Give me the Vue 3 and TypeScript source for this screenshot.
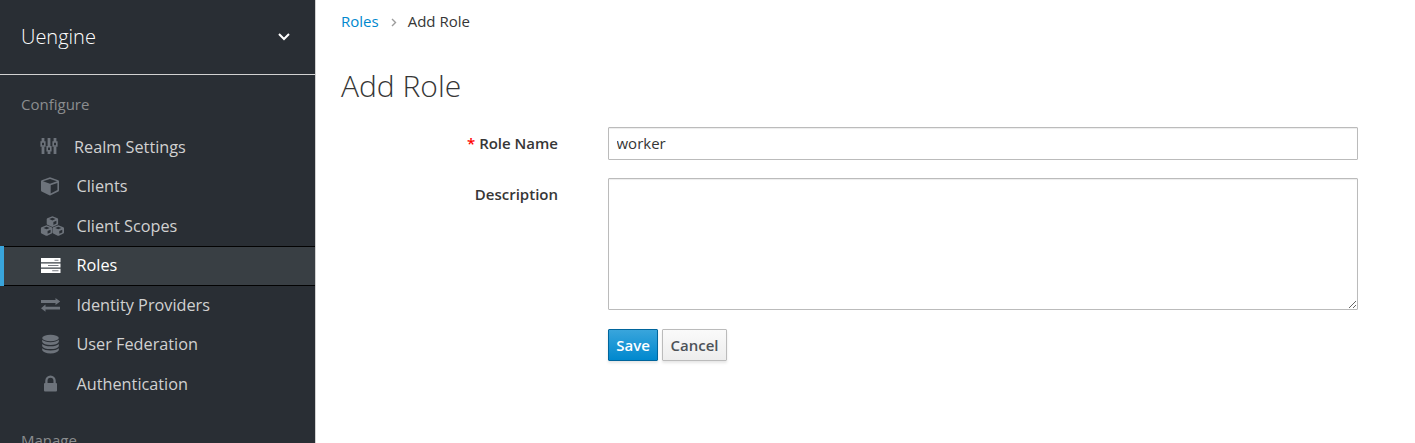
<script setup lang="ts">
import { ref } from 'vue'

interface NavItem {
  id: string
  label: string
}

const items: NavItem[] = [
  { id: 'settings', label: 'Realm Settings' },
  { id: 'clients', label: 'Clients' },
  { id: 'scopes', label: 'Client Scopes' },
  { id: 'roles', label: 'Roles' },
  { id: 'identity', label: 'Identity Providers' },
  { id: 'federation', label: 'User Federation' },
  { id: 'auth', label: 'Authentication' },
]

const cubePlaces = ['translate(6.8 .3)', 'translate(1 9.2)', 'translate(12.7 9.2)']

const active = ref('roles')
const roleName = ref('worker')
const description = ref('')
</script>

<template>
  <div class="page">
    <aside class="sidebar">
      <div class="realm">
        <span>Uengine</span>
        <svg width="14" height="10" viewBox="0 0 14 10"><path d="M2 2l5 5 5-5" fill="none" stroke="#fff" stroke-width="2" /></svg>
      </div>
      <h2 class="group">Configure</h2>
      <nav>
        <a v-for="item in items" :key="item.id" class="item" :class="[item.id, { active: active === item.id }]" @click="active = item.id">
          <svg class="icon" width="24" height="20" viewBox="0 0 24 20">
            <g v-if="item.id === 'settings'" fill="none" stroke="currentColor">
              <path d="M3 1v4M3 9.5V17M9 1v8M9 14v3M15 1v4M15 9.5V17" stroke-width="2.8" />
              <path d="M1.2 5h3.6v4H1.2zM7.2 9.7h3.6v4H7.2zM13.2 5h3.6v4h-3.6z" stroke-width="1.6" />
            </g>
            <g v-else-if="item.id === 'clients'">
              <path d="M10 1.3L18.3 4.2Q19 4.5 19 5.3V14.3Q19 15 18.4 15.4L10.7 19.3Q10 19.6 9.3 19.3L1.6 15.4Q1 15 1 14.3V5.3Q1 4.5 1.7 4.2ZM10 2.9L3 5.3 10 7.8 17 5.3ZM10.7 17.4L17.4 13.9V6.9L10.7 9.3Z" fill="currentColor" fill-rule="evenodd" />
            </g>
            <g v-else-if="item.id === 'scopes'" fill="currentColor" fill-rule="evenodd">
              <path v-for="place in cubePlaces" :key="place" :transform="place" d="M5.6 0L10.7 2Q11.3 2.3 11.3 3V7.4Q11.3 8.1 10.7 8.4L6.2 10.5Q5.6 10.8 5 10.5L.5 8.4Q-.1 8.1-.1 7.4V3Q-.1 2.3.5 2ZM5.6 1.5L2.5 2.8 5.6 4.1 8.7 2.8ZM6.6 8.6L9.6 7.2V4.5L6.6 5.8Z" />
            </g>
            <g v-else-if="item.id === 'roles'">
              <path d="M1 2h19.5v4.3H1zM1 7.4h19.5v4.2H1zM1 12.7h19.5V17H1z" fill="currentColor" />
              <path d="M14.5 4.2h4M8 9.5h10.5M12.2 14.8h6.3" stroke="#777b82" stroke-width="1.1" />
            </g>
            <g v-else-if="item.id === 'identity'" fill="currentColor">
              <path d="M1 5.1h14.5V3l4.7 3.5-4.7 3.6V7.9H1zM20 11.8H5.5V9.6L1 13.2l4.5 3.6v-2.3H20z" />
            </g>
            <g v-else-if="item.id === 'federation'" fill="currentColor">
              <ellipse cx="10.5" cy="4" rx="8.3" ry="3.2" />
              <path d="M2.2 5.8Q4.8 8.2 10.5 8.2T18.8 5.8V8Q17.2 11 10.5 11T2.2 8ZM2.2 10Q4.8 12.3 10.5 12.3T18.8 10V12.2Q17.2 15.1 10.5 15.1T2.2 12.2ZM2.2 14.2Q4.8 16.4 10.5 16.4T18.8 14.2V16.3Q17.2 19.4 10.5 19.4T2.2 16.3Z" />
            </g>
            <g v-else>
              <path d="M6.4 10V6.8a4.1 4.1 0 0 1 8.2 0V10" fill="none" stroke="currentColor" stroke-width="2.3" />
              <rect x="4" y="9" width="13" height="8.5" rx="1" fill="currentColor" />
            </g>
          </svg>
          <span class="text">{{ item.label }}</span>
        </a>
      </nav>
      <h2 class="group manage">Manage</h2>
    </aside>

    <main class="content">
      <ol class="breadcrumb">
        <li><a>Roles</a></li>
        <li class="separator"><svg width="6" height="9" viewBox="0 0 6 9"><path d="M1 1l3.5 3.5L1 8" fill="none" stroke="#9c9c9c" stroke-width="1.4" /></svg></li>
        <li>Add Role</li>
      </ol>
      <h1>Add Role</h1>
      <form @submit.prevent>
        <div class="field">
          <label for="name"><span class="required">*</span> Role Name</label>
          <input id="name" v-model="roleName" type="text" />
        </div>
        <div class="field">
          <label for="description">Description</label>
          <textarea id="description" v-model="description"></textarea>
        </div>
        <div class="actions">
          <button class="primary" type="submit">Save</button>
          <button type="button">Cancel</button>
        </div>
      </form>
    </main>
  </div>
</template>

<style>
body {
  overflow: hidden;
}
</style>

<style scoped>
.page {
  box-sizing: border-box;
  display: flex;
  height: 443px;
  overflow: hidden;
  background: #fff;
  color: #363636;
  font: 15px/25px "Open Sans", sans-serif;
}
.page * {
  box-sizing: border-box;
}
.sidebar {
  width: 316px;
  flex: none;
  background: #292e34;
  border-right: 1px solid #d1d1d1;
}
.realm {
  height: 75px;
  padding: 0 24px 1px 21px;
  display: flex;
  align-items: center;
  justify-content: space-between;
  border-bottom: 1px solid #d1d1d1;
  color: #fff;
  font-size: 20px;
  font-weight: 300;
}
.group {
  margin: 0;
  padding: 17px 0 0 21px;
  height: 52px;
  color: #8b8d8f;
  font-size: 15px;
  line-height: 25px;
  font-weight: 400;
}
.manage {
  padding-top: 24px;
}
.item {
  height: 39.5px;
  padding-left: 40px;
  display: flex;
  align-items: center;
  color: #d1d1d1;
  font-size: 16.25px;
  cursor: pointer;
}
.text {
  padding-top: 0.7px;
}
.icon {
  flex: none;
  margin-right: 12.5px;
  color: #6d737b;
}
.settings .icon {
  margin-right: 10px;
}
.item.active {
  height: 40px;
  margin-bottom: -0.5px;
  padding-left: 36px;
  border-left: 4px solid #39a5dc;
  box-shadow: inset 0 1px #030303, inset 0 -1px #030303;
  background: #393f44;
  color: #fff;
}
.item.active .icon {
  color: #fff;
}
.content {
  flex: 1;
  padding: 9px 57px 0 25px;
}
.breadcrumb {
  display: flex;
  align-items: center;
  margin: 0;
  padding: 0;
  list-style: none;
}
.breadcrumb a {
  color: #0088ce;
}
.separator {
  display: flex;
  padding: 2px 11px 0 12px;
}
h1 {
  margin: 35px 0 24px;
  font-size: 30px;
  line-height: 34px;
  font-weight: 300;
}
.field {
  display: grid;
  grid-template-columns: 217px 750px;
  column-gap: 50px;
  margin-bottom: 18px;
}
label {
  padding-top: 4px;
  text-align: right;
  font-weight: 600;
}
.required {
  color: #f00;
}
input,
textarea {
  display: block;
  width: 100%;
  margin: 0;
  padding: 2px 7.5px;
  border: 1px solid #bbb;
  border-radius: 1px;
  outline: 0;
  background: #fff;
  color: #363636;
  font: 15px/25px "Open Sans", sans-serif;
  box-shadow: inset 0 1px 1px rgba(3, 3, 3, 0.075);
}
input {
  height: 33px;
  padding-bottom: 4px;
}
textarea {
  height: 132px;
  resize: vertical;
}
.actions {
  display: flex;
  gap: 4px;
  margin: 19px 0 0 267px;
}
button {
  height: 32px;
  width: 65px;
  padding: 0;
  border: 1px solid #bbb;
  border-radius: 1px;
  background: linear-gradient(#fafafa, #ededed);
  box-shadow: 0 2px 3px rgba(3, 3, 3, 0.1);
  color: #4d5258;
  font: 600 15px/25px "Open Sans", sans-serif;
}
.primary {
  width: 50px;
  border-color: #00659c;
  background: linear-gradient(#39a5dc, #0088ce);
  color: #fff;
}
</style>
